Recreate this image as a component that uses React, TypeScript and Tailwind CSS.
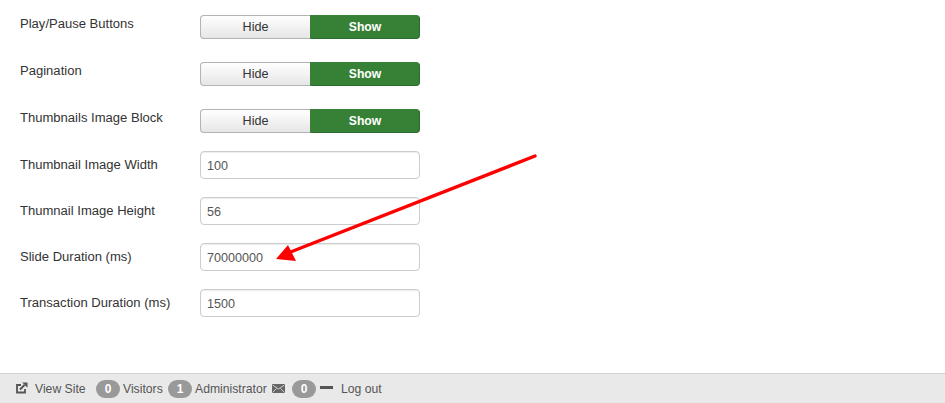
import { ReactNode } from "react";

// ─── Rows ─────────────────────────────────────────────────────────────────────

function Label({ children }: { children: ReactNode }) {
  return <label className="w-[180px] pt-[5px] leading-[18px] text-[13.05px] text-[#333333]">{children}</label>;
}

function ToggleRow({ label }: { label: string }) {
  return (
    <div className="flex h-[28px] mb-[19px]">
      <Label>{label}</Label>
      <div className="flex w-[220px] h-[24px] mt-[5px] leading-[22px]">
        <div className="w-[110px] text-center text-[12.6px] text-[#333333] rounded-l-[4px] border border-[#b3b3b3] border-r-0 bg-gradient-to-b from-white to-[#e6e6e6]">
          Hide
        </div>
        <div className="w-[110px] text-center text-[12.2px] font-bold text-white rounded-r-[4px] bg-[#378137] border border-[#2d6a2d] border-t-[#378137] border-l-[#378137]">
          Show
        </div>
      </div>
    </div>
  );
}

function InputRow({ label, value }: { label: string; value: string }) {
  return (
    <div className="flex h-[28px] mb-[18px]">
      <Label>{label}</Label>
      <div className="w-[220px] h-[28px] pl-[6px] leading-[28px] text-[12.6px] text-[#555555] bg-white rounded-[4px] border border-[#cccccc] shadow-[inset_0_1px_1px_rgba(0,0,0,0.075)]">
        {value}
      </div>
    </div>
  );
}

function Badge({ children }: { children: ReactNode }) {
  return (
    <span className="block w-[24px] h-[18px] rounded-[9px] bg-[#999999] text-white text-[12px] font-bold leading-[18px] text-center">
      {children}
    </span>
  );
}

// ─── Component ────────────────────────────────────────────────────────────────

export default function App() {
  return (
    <div className="relative flex flex-col h-[403px] overflow-hidden bg-white text-[13px] font-['Liberation_Sans',Arial,sans-serif]">
      <div className="flex-1 pl-[20px] pt-[10px]">
        <ToggleRow label="Play/Pause Buttons" />
        <ToggleRow label="Pagination" />
        <ToggleRow label="Thumbnails Image Block" />
        <InputRow label="Thumbnail Image Width" value="100" />
        <InputRow label="Thumnail Image Height" value="56" />
        <InputRow label="Slide Duration (ms)" value="70000000" />
        <InputRow label="Transaction Duration (ms)" value="1500" />
      </div>

      {/* Annotation arrow */}
      <svg className="absolute left-0 top-0 pointer-events-none" width="945" height="403" fill="none">
        <path d="M535 156 L288 253" stroke="#ff0000" strokeWidth="3.4" strokeLinecap="round" />
        <path d="M276 259 L288 245 L296 261 Z" fill="#ff0000" />
      </svg>

      {/* Status bar */}
      <div className="flex items-center h-[30px] pt-[1px] pl-[16px] text-[12.2px] leading-[18px] text-[#555555] bg-[#e9e9e9] border-t border-[#d4d4d4]">
        <svg className="-mt-[2px]" width="12" height="12" viewBox="0 0 12 12" fill="none">
          <path d="M9 7v3.5H1V3h4" stroke="#555555" strokeWidth="1.8" />
          <path d="M4 7.5L8.5 3" stroke="#555555" strokeWidth="2" />
          <path d="M6.2 0.5H11.5V5.8Z" fill="#555555" />
        </svg>
        <span className="ml-[7px] w-[51px]">View Site</span>
        <span className="ml-[10px]"><Badge>0</Badge></span>
        <span className="ml-[3px] w-[40px]">Visitors</span>
        <span className="ml-[5px]"><Badge>1</Badge></span>
        <span className="ml-[3px] w-[72px]">Administrator</span>
        <svg className="ml-[5px] -mt-[2px]" width="13" height="9" viewBox="0 0 13 9">
          <rect width="13" height="9" fill="#666666" />
          <path d="M0.5 1l6 4 6-4M0.5 8.5l4-4M12.5 8.5l-4-4" stroke="#e9e9e9" strokeWidth="0.8" fill="none" />
        </svg>
        <span className="ml-[7px]"><Badge>0</Badge></span>
        <span className="ml-[4px] -mt-[3px] w-[13px] h-[3px] bg-[#555555]" />
        <span className="ml-[8px]">Log out</span>
      </div>
    </div>
  );
}
